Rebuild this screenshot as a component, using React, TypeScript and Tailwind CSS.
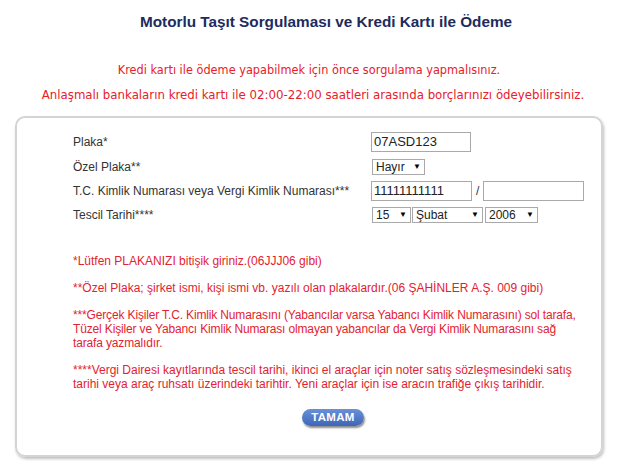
import React from 'react';

const labelCls = 'h-[20px] flex items-center';
const selectCls =
  'h-[16px] border border-[#a9a9a9] bg-white text-[12px] text-[#222] flex items-center justify-between px-[3px]';

const Caret = () => <span className="text-[8px] leading-none text-black">▼</span>;

const App: React.FC = () => {
  return (
    <div className="w-[640px] h-[466px] bg-white overflow-hidden font-['Liberation_Sans',Arial,sans-serif]">
      <h1 className="pt-[13px] pl-[12px] text-center text-[15.3px] font-bold text-[#1c2c5e] leading-[18px]">
        Motorlu Taşıt Sorgulaması ve Kredi Kartı ile Ödeme
      </h1>

      <div className="mt-[31px] pr-[14px] text-center text-[#e8202a] font-['DejaVu_Sans_Condensed','DejaVu_Sans',sans-serif] leading-[16px]">
        <p className="pr-[8px] text-[12.6px]">Kredi kartı ile ödeme yapabilmek için önce sorgulama yapmalısınız.</p>
        <p className="mt-[9px] text-[13.1px]">
          Anlaşmalı bankaların kredi kartı ile 02:00-22:00 saatleri arasında borçlarınızı ödeyebilirsiniz.
        </p>
      </div>

      <div className="ml-[15px] mt-[13px] w-[588px] h-[341px] border-2 border-[#d4d4d4] rounded-[10px] shadow-[1px_2px_3px_rgba(0,0,0,0.25)] pt-[14px] pl-[56px]">
        <div className="flex text-[12px] text-[#333]">
          <div className="w-[298px] flex flex-col">
            <div className={labelCls}>Plaka*</div>
            <div className="h-[16px] mt-[7px] flex items-center">Özel Plaka**</div>
            <div className={`${labelCls} mt-[6px]`}>T.C. Kimlik Numarası veya Vergi Kimlik Numarası***</div>
            <div className="h-[16px] mt-[6px] flex items-center">Tescil Tarihi****</div>
          </div>
          <div className="flex flex-col">
            <div className="w-[100px] h-[20px] border border-[#a9a9a9] px-[2px] flex items-center text-[13px] text-[#222]">
              07ASD123
            </div>
            <div className={`${selectCls} w-[53px] mt-[7px] ml-[1px]`}>
              <span>Hayır</span>
              <Caret />
            </div>
            <div className="flex items-center mt-[6px]">
              <div className="w-[101px] h-[20px] border border-[#a9a9a9] px-[2px] flex items-center text-[13px] text-[#222]">
                11111111111
              </div>
              <span className="mx-[4px] text-[#333]">/</span>
              <div className="w-[101px] h-[20px] border border-[#a9a9a9]" />
            </div>
            <div className="flex mt-[6px] ml-[1px] gap-[1px]">
              <div className={`${selectCls} w-[39px]`}>
                <span>15</span>
                <Caret />
              </div>
              <div className={`${selectCls} w-[71px]`}>
                <span>Şubat</span>
                <Caret />
              </div>
              <div className={`${selectCls} w-[53px] ml-[1px]`}>
                <span>2006</span>
                <Caret />
              </div>
            </div>
          </div>
        </div>

        <div className="mt-[31px] text-[12px] leading-[14px] text-[#e4222f] whitespace-nowrap">
          <p>*Lütfen PLAKANIZI bitişik giriniz.(06JJJ06 gibi)</p>
          <p className="mt-[13px]">
            **Özel Plaka; şirket ismi, kişi ismi vb. yazılı olan plakalardır.(06 ŞAHİNLER A.Ş. 009 gibi)
          </p>
          <p className="mt-[13px] tracking-[-0.15px]">
            ***Gerçek Kişiler T.C. Kimlik Numarasını (Yabancılar varsa Yabancı Kimlik Numarasını) sol tarafa,
            <br />
            Tüzel Kişiler ve Yabancı Kimlik Numarası olmayan yabancılar da Vergi Kimlik Numarasını sağ
            <br />
            tarafa yazmalıdır.
          </p>
          <p className="mt-[13px]">
            ****Vergi Dairesi kayıtlarında tescil tarihi, ikinci el araçlar için noter satış sözleşmesindeki satış
            <br />
            tarihi veya araç ruhsatı üzerindeki tarihtir. Yeni araçlar için ise aracın trafiğe çıkış tarihidir.
          </p>
        </div>

        <div className="mt-[18px] flex justify-center pr-[8px]">
          <button className="w-[62px] h-[17px] rounded-full bg-gradient-to-b from-[#6a90d8] to-[#3e66b8] text-white text-[11.5px] font-bold tracking-[0.3px] shadow-[1px_2px_2px_rgba(0,0,0,0.45)] flex items-center justify-center">
            TAMAM
          </button>
        </div>
      </div>
    </div>
  );
};

export default App;
